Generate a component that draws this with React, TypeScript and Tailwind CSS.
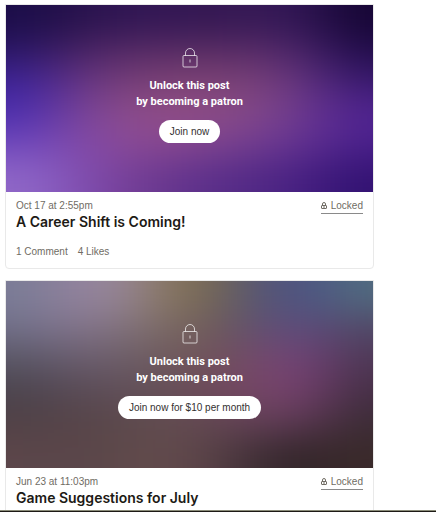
import { useId } from 'react'

type Post = {
    id: number
    title: string
    date: string
    cta: string
    stats: string[]
    cover: string[][]
}

const posts: Post[] = [
    {
        id: 1,
        title: 'A Career Shift is Coming!',
        date: 'Oct 17 at 2:55pm',
        cta: 'Join now',
        stats: ['1 Comment', '4 Likes'],
        cover: [
            ['#1b0d48', '#27124c', '#2f1552', '#331755', '#321650', '#371a56', '#2f1555', '#160634'],
            ['#2c1766', '#482365', '#562a66', '#592d66', '#5a2d64', '#5a2c68', '#4a256c', '#220d4c'],
            ['#3e249a', '#643386', '#78407a', '#7d4274', '#7e4576', '#794178', '#643482', '#3a1a70'],
            ['#4c2eae', '#75429b', '#8c4c8c', '#924f86', '#8e4d84', '#82488a', '#6c3990', '#512492'],
            ['#7048bc', '#8049ac', '#8a4a98', '#884790', '#7d4390', '#703c90', '#623192', '#4a208b'],
            ['#9068c8', '#8050b6', '#784098', '#66368e', '#5a2e8a', '#502884', '#461f82', '#321272'],
        ],
    },
    {
        id: 2,
        title: 'Game Suggestions for July',
        date: 'Jun 23 at 11:03pm',
        cta: 'Join now for $10 per month',
        stats: [],
        cover: [
            ['#7b7d97', '#94829e', '#98889e', '#89775b', '#756751', '#545676', '#4b5085', '#516c80'],
            ['#72708a', '#84748d', '#81727f', '#7c6b62', '#6d5959', '#5f4f72', '#5f4b7f', '#514867'],
            ['#5a5766', '#6a5d70', '#6d5e6a', '#6c5a5a', '#735258', '#72476b', '#76427c', '#4f3856'],
            ['#4b444e', '#594a57', '#5f4f58', '#67505a', '#6e485a', '#784668', '#774072', '#472f47'],
            ['#504146', '#564448', '#5b484b', '#624d50', '#634852', '#66415a', '#5f3957', '#3c2d37'],
            ['#5c464a', '#59454a', '#5e494a', '#644c4d', '#584147', '#3c2c33', '#302428', '#3b2a2a'],
        ],
    },
]

// Blurred preview of the hidden image, drawn from a coarse grid of colours
function BlurredCover({ rows }: { rows: string[][] }) {
    const filterId = useId()
    const lastRow = rows.length - 1

    return (
        <svg
            className="absolute inset-0 h-full w-full"
            viewBox="0 0 368 187"
            preserveAspectRatio="none"
            aria-hidden="true"
        >
            <filter
                id={filterId}
                filterUnits="userSpaceOnUse"
                x="-150"
                y="-100"
                width="670"
                height="390"
                colorInterpolationFilters="sRGB"
            >
                <feGaussianBlur stdDeviation="31 18" />
            </filter>
            <g filter={`url(#${filterId})`}>
                {rows.map((row, y) =>
                    row.map((color, x) => {
                        const left = x === 0 ? -150 : x * 46
                        const right = x === row.length - 1 ? 520 : x * 46 + 47
                        const top = y === 0 ? -100 : y * 31
                        const bottom = y === lastRow ? 290 : y * 31 + 32
                        return (
                            <rect
                                key={`${x}-${y}`}
                                x={left}
                                y={top}
                                width={right - left}
                                height={bottom - top}
                                fill={color}
                            />
                        )
                    })
                )}
            </g>
        </svg>
    )
}

function LockOutline() {
    return (
        <svg width="16" height="20" viewBox="0 0 16 20" fill="none" stroke="currentColor" aria-hidden="true">
            <path d="M3.5 7.5V5a4.5 4.5 0 0 1 9 0v2.5" />
            <rect x="1" y="7.5" width="14" height="11.5" rx="1" />
            <path d="M8 11.5v3" />
        </svg>
    )
}

function LockSmall() {
    return (
        <svg width="6" height="9" viewBox="0 0 6 9" fill="none" stroke="currentColor" aria-hidden="true">
            <path d="M1.5 3V2a1.5 1.5 0 0 1 3 0v1" />
            <rect x="0.5" y="3.5" width="5" height="3" rx="0.5" />
            <path d="M3 4v2" />
        </svg>
    )
}

function PostCard({ post }: { post: Post }) {
    return (
        <article className="shrink-0 rounded-b-sm border border-[#e9e9e9] bg-white">
            <div className="relative flex h-[187px] flex-col items-center overflow-hidden pt-[43px] text-white">
                <BlurredCover rows={post.cover} />
                <div className="relative flex flex-col items-center">
                    <span className="text-white/70">
                        <LockOutline />
                    </span>
                    <p className="mt-[10px] text-center font-['Roboto','Liberation_Sans',sans-serif] text-[11px] leading-4 font-bold">
                        Unlock this post
                        <br />
                        by becoming a patron
                    </p>
                    <button
                        type="button"
                        className="mt-[10px] h-[23px] rounded-full bg-white px-[11px] text-[10px] leading-4 font-medium text-[#33302f]"
                    >
                        {post.cta}
                    </button>
                </div>
            </div>

            <div className="px-[10px] pt-[7px] pb-2">
                <div className="flex items-start justify-between">
                    <time className="text-[10px] leading-[14px] text-[#706c64]">{post.date}</time>
                    <a
                        href="#locked"
                        className="flex items-center gap-1 border-b border-[#8a8a8a] text-[10px] leading-[14px] text-[#706c64]"
                    >
                        <LockSmall />
                        Locked
                    </a>
                </div>
                <h2 className="font-['Inter','Liberation_Sans',sans-serif] text-[14px] leading-4 font-semibold text-[#1d1a15]">
                    {post.title}
                </h2>
                {post.stats.length > 0 && (
                    <div className="mt-[14px] flex gap-[10px] text-[10px] leading-4 text-[#706c64]">
                        {post.stats.map((stat) => (
                            <span key={stat}>{stat}</span>
                        ))}
                    </div>
                )}
            </div>
        </article>
    )
}

export default function App() {
    return (
        <div className="flex h-screen flex-col overflow-hidden bg-white font-['Liberation_Sans',Arial,sans-serif]">
            <main className="flex min-h-0 flex-1 flex-col gap-[11px] overflow-hidden pt-1 pr-[62px] pl-[5px]">
                {posts.map((post) => (
                    <PostCard key={post.id} post={post} />
                ))}
            </main>
            <footer className="h-[2px] shrink-0 border-t border-[#8a8b78] bg-[#1d1a15]" />
        </div>
    )
}
